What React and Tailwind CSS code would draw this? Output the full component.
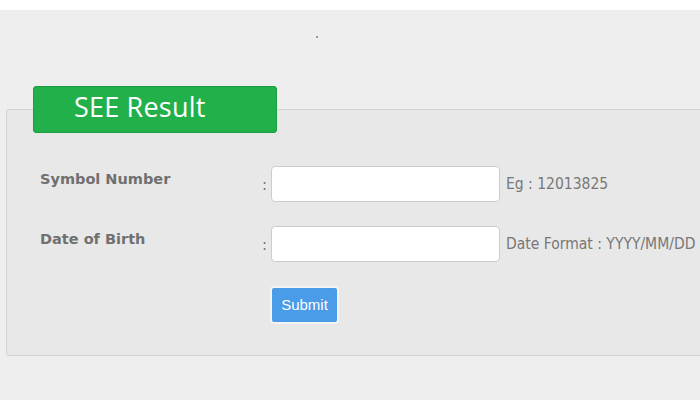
import React from 'react';

const fields = [
    { label: "Symbol Number", hint: "Eg : 12013825" },
    { label: "Date of Birth", hint: "Date Format : YYYY/MM/DD" },
];

const App = () => {
    return (
        <div className="w-[700px] h-[400px] overflow-hidden bg-white">
            <div className="mt-[10px] h-[390px] bg-[#eeeeee] relative">
                {/* stray dot */}
                <div className="absolute left-[316px] top-[26px] w-[2px] h-[2px] bg-[#9a9a9a]"></div>

                <div className="pt-[76px] pl-[6px]">
                    {/* green tab */}
                    <div className="relative z-10 ml-[27px] w-[244px] h-[47px] bg-[#22b04b] border border-[#1e9c42] rounded-[3px] flex items-center pl-[40px] pb-[6px]">
                        <span className="text-white text-[27px] leading-none tracking-[0.2px]" style={{ fontFamily: '"Open Sans", sans-serif' }}>
                            SEE Result
                        </span>
                    </div>

                    {/* form panel */}
                    <div className="-mt-[24px] w-[720px] h-[247px] bg-[#e8e8e8] border border-[#d2d2d2] rounded-[3px] pt-[56px] pl-[33px]">
                        <div className="flex flex-col gap-[24px]">
                            {fields.map((f, i) => (
                                <div key={i} className="flex items-start h-[36px]">
                                    <div
                                        className="w-[222px] pt-[3px] text-[14.5px] font-bold text-[#707070]"
                                        style={{ fontFamily: '"DejaVu Sans", Verdana, sans-serif' }}
                                    >
                                        {f.label}
                                    </div>
                                    <div className="w-[9px] h-[36px] pt-[2px] flex items-center text-[15px] text-[#777777]" style={{ fontFamily: '"DejaVu Sans", sans-serif' }}>:</div>
                                    <input
                                        type="text"
                                        className="w-[229px] h-[36px] bg-white border border-[#cccccc] rounded-[4px] outline-none px-2"
                                    />
                                    <div
                                        className="ml-[6px] h-[36px] pt-[2px] flex items-center whitespace-nowrap text-[15.5px] text-[#777777]"
                                        style={{ fontFamily: '"DejaVu Sans Condensed", "DejaVu Sans", sans-serif' }}
                                    >
                                        {f.hint}
                                    </div>
                                </div>
                            ))}
                        </div>

                        <div className="mt-[24px] ml-[230px]">
                            <button
                                className="w-[69px] h-[38px] bg-[#4a9be8] text-white text-[15px] rounded-[4px] border-2 border-[#f4f4f4]"
                                style={{ fontFamily: '"Liberation Sans", Arial, sans-serif' }}
                            >
                                Submit
                            </button>
                        </div>
                    </div>
                </div>
            </div>
        </div>
    );
};

export default App;
